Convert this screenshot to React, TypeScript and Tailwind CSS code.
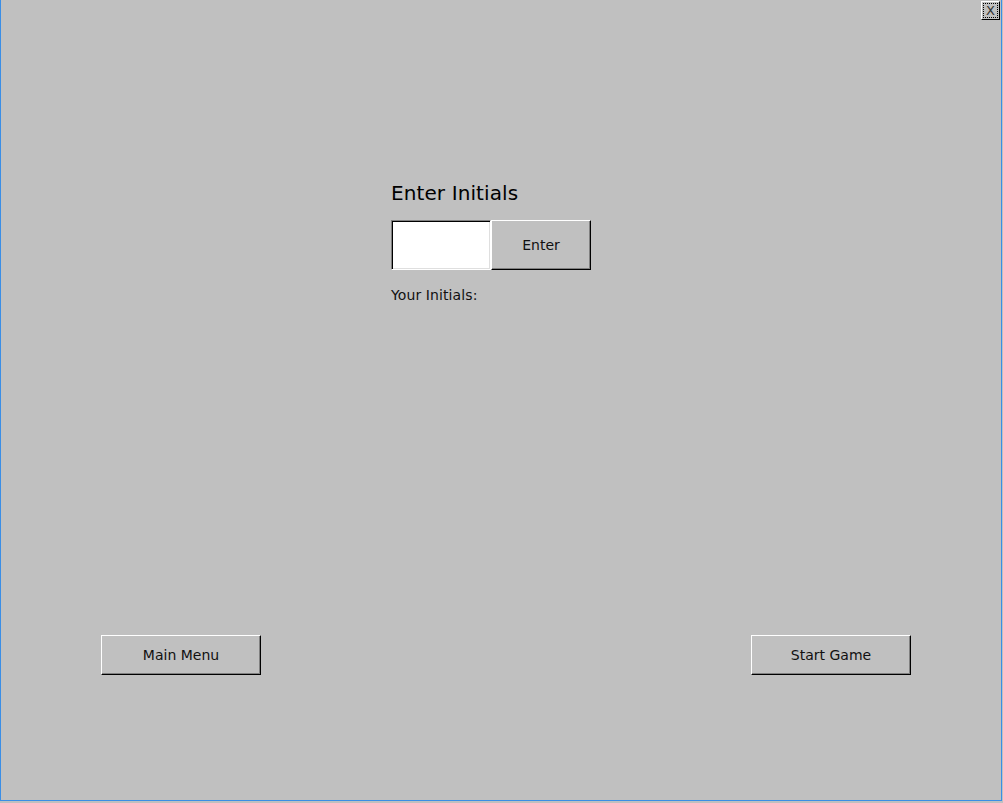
import React, { useState } from 'react';

const FONT = "font-['DejaVu_Sans',sans-serif]";

const RaisedButton = ({ label, className = '' }: { label: string; className?: string }) => (
  <button
    className={`bg-[#c0c0c0] border border-t-white border-l-white border-b-black border-r-black shadow-[inset_-1px_-1px_0_#808080] text-[14px] text-[#111] ${FONT} ${className}`}
  >
    {label}
  </button>
);

export default function App() {
  const [initials, setInitials] = useState('');
  const [saved, setSaved] = useState('');

  return (
    <div className="w-[1003px] h-[803px] bg-[#c0c0c0] relative">
      <div className="w-[1002px] h-[801px] border-l border-r border-b border-[#3a8ee6] flex flex-col">
        {/* center form */}
        <div className="pl-[390px] pt-[181px] flex flex-col items-start">
          <h1 className={`text-[20px] leading-[24px] tracking-[0.1px] text-black ${FONT}`}>Enter Initials</h1>
          <div className="flex mt-[15px]">
            <input
              value={initials}
              onChange={(e) => setInitials(e.target.value)}
              className={`w-[100px] h-[50px] bg-white border border-t-[#808080] border-l-[#808080] border-b-white border-r-white shadow-[inset_1px_1px_0_#000,inset_-1px_-1px_0_#dfdfdf] outline-none px-1 text-[14px] ${FONT}`}
            />
            <RaisedButton label="Enter" className="w-[100px] h-[50px]" />
          </div>
          <div className={`mt-[15px] text-[14px] leading-[20px] tracking-[0.1px] text-[#111] ${FONT}`} onClick={() => setSaved(initials)}>
            Your Initials: {saved}
          </div>
        </div>

        {/* bottom buttons */}
        <div className="mt-auto mb-[125px] flex justify-between pl-[100px] pr-[90px]">
          <RaisedButton label="Main Menu" className="w-[160px] h-[40px]" />
          <RaisedButton label="Start Game" className="w-[160px] h-[40px]" />
        </div>
      </div>

      {/* close button */}
      <button
        className={`absolute top-[1px] left-[981px] w-[19px] h-[19px] bg-[#c0c0c0] border border-t-white border-l-white border-b-black border-r-black flex items-center justify-center p-[1px] ${FONT}`}
      >
        <span className="w-full h-full border border-dotted border-black flex items-center justify-center text-[13px] leading-none text-[#333]">
          X
        </span>
      </button>
    </div>
  );
}
